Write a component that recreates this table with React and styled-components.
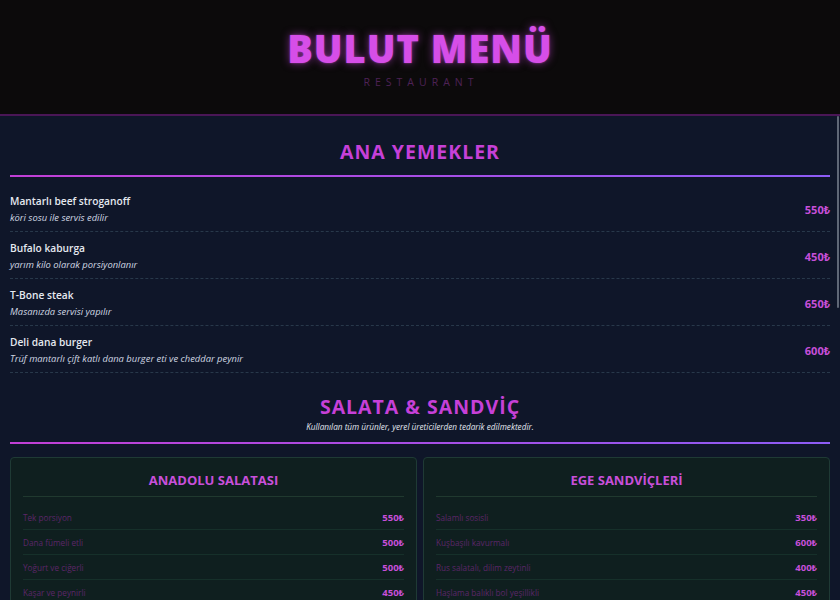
import React from 'react';
import styled, { createGlobalStyle } from 'styled-components';

const GlobalStyle = createGlobalStyle`
  html, body {
    margin: 0;
    padding: 0;
    height: 100%;
    background: #0f1629;
  }
  #root {
    height: 100%;
  }
  * {
    box-sizing: border-box;
  }
`;

const Page = styled.div`
  position: relative;
  height: 100vh;
  display: flex;
  flex-direction: column;
  font-family: "Open Sans", "Noto Sans", sans-serif;
  background: #0f1629;
`;

const Header = styled.header`
  flex: 0 0 auto;
  height: 116px;
  background: #0c0a0b;
  border-bottom: 2px solid #4a1656;
  display: flex;
  flex-direction: column;
  align-items: center;
  padding-top: 26px;
`;

const Brand = styled.h1`
  margin: 0;
  font-size: 38px;
  line-height: 44px;
  font-weight: 800;
  letter-spacing: 1px;
  color: #d64ee8;
  text-shadow: 0 0 8px rgba(214, 78, 232, 0.55), 0 0 2px rgba(214, 78, 232, 0.6);
`;

const Tagline = styled.div`
  margin-top: 5px;
  font-size: 10.5px;
  line-height: 15px;
  letter-spacing: 5px;
  color: #4e2256;
  padding-left: 2px;
`;

const Main = styled.main`
  flex: 1 1 auto;
  overflow-y: auto;
  padding: 0 10px 24px;
  scrollbar-width: none;

  &::-webkit-scrollbar {
    display: none;
  }
`;

/* thin scrollbar thumb of the content pane */
const ScrollThumb = styled.div`
  position: absolute;
  top: 116px;
  right: 1px;
  width: 2px;
  height: 192px;
  border-radius: 1px;
  background: #5f6776;
`;

const SectionHead = styled.div`
  padding-top: ${p => p.$top}px;
  display: flex;
  flex-direction: column;
  align-items: center;
`;

const SectionTitle = styled.h2`
  margin: 0;
  font-size: 19.5px;
  line-height: 28px;
  font-weight: 700;
  letter-spacing: 1px;
  color: #c640d8;
`;

const SectionNote = styled.p`
  margin: 0;
  font-size: 8.2px;
  line-height: 12px;
  font-style: italic;
  color: #e2e8f0;
`;

const Divider = styled.div`
  width: 100%;
  height: 2px;
  margin-top: 9px;
  background: linear-gradient(90deg, #c23fd6, #8d5cf5);
`;

const ItemList = styled.ul`
  list-style: none;
  margin: 8px 0 0;
  padding: 0;
`;

const Item = styled.li`
  display: flex;
  align-items: center;
  justify-content: space-between;
  padding: 8px 0 6px;
  border-bottom: 1px dashed #28384a;
`;

const ItemText = styled.div`
  display: flex;
  flex-direction: column;
  gap: 2px;
`;

const ItemName = styled.span`
  font-size: 10.2px;
  line-height: 16px;
  font-weight: 600;
  color: #e5e9f0;
`;

const ItemDesc = styled.span`
  font-size: 9.4px;
  line-height: 14px;
  font-style: italic;
  color: #cfd6e2;
`;

const Price = styled.span`
  font-size: ${p => (p.$small ? 9.5 : 11)}px;
  font-weight: 700;
  color: #c74fd9;
`;

const CardGrid = styled.div`
  display: grid;
  grid-template-columns: 1fr 1fr;
  gap: 6px;
  margin-top: 13px;
`;

const Card = styled.div`
  background: #0f1f1f;
  border: 1px solid #1f3a35;
  border-radius: 4px;
  padding: 12px 12px 10px;
`;

const CardTitle = styled.h3`
  margin: 0;
  padding-bottom: 6px;
  text-align: center;
  font-size: 13px;
  line-height: 20px;
  font-weight: 700;
  color: #c84fda;
  border-bottom: 1px solid #20392f;
`;

const CardList = styled.ul`
  list-style: none;
  margin: 8px 0 0;
  padding: 0;
`;

const CardRow = styled.li`
  display: flex;
  justify-content: space-between;
  align-items: center;
  padding: 5.5px 0;
  line-height: 13px;
  border-bottom: 1px solid #16302a;

  &:last-child {
    border-bottom: none;
  }
`;

const CardItem = styled.span`
  font-size: 8.2px;
  color: #5c2668;
`;

const mains = [
  { name: 'Mantarlı beef stroganoff', desc: 'köri sosu ile servis edilir', price: '550₺' },
  { name: 'Bufalo kaburga', desc: 'yarım kilo olarak porsiyonlanır', price: '450₺' },
  { name: 'T-Bone steak', desc: 'Masanızda servisi yapılır', price: '650₺' },
  { name: 'Deli dana burger', desc: 'Trüf mantarlı çift katlı dana burger eti ve cheddar peynir', price: '600₺' },
];

const cards = [
  {
    title: 'ANADOLU SALATASI',
    rows: [
      ['Tek porsiyon', '550₺'],
      ['Dana fümeli etli', '500₺'],
      ['Yoğurt ve ciğerli', '500₺'],
      ['Kaşar ve peynirli', '450₺'],
      ['Ton balıklı', '500₺'],
    ],
  },
  {
    title: 'EGE SANDVİÇLERİ',
    rows: [
      ['Salamlı sosisli', '350₺'],
      ['Kuşbaşılı kavurmalı', '600₺'],
      ['Rus salatalı, dilim zeytinli', '400₺'],
      ['Haşlama balıklı bol yeşillikli', '450₺'],
      ['Tavuklu ve közlenmiş biberli', '400₺'],
    ],
  },
];

const desserts = [
  { name: 'Fırın sütlaç', desc: 'fındık kırığı ile servis edilir', price: '150₺' },
  { name: 'Künefe', desc: 'Hatay peyniri ve Antep fıstığı ile', price: '220₺' },
  { name: 'Trileçe', desc: 'karamel soslu, günlük taze', price: '160₺' },
  { name: 'Katmer', desc: 'dondurma ile birlikte sunulur', price: '240₺' },
];

const App = () => {
  return (
    <>
      <GlobalStyle />
      <Page>
        <Header>
          <Brand>BULUT MENÜ</Brand>
          <Tagline>RESTAURANT</Tagline>
        </Header>
        <Main>
          <SectionHead $top={22}>
            <SectionTitle>ANA YEMEKLER</SectionTitle>
            <Divider />
          </SectionHead>
          <ItemList>
            {mains.map(m => (
              <Item key={m.name}>
                <ItemText>
                  <ItemName>{m.name}</ItemName>
                  <ItemDesc>{m.desc}</ItemDesc>
                </ItemText>
                <Price>{m.price}</Price>
              </Item>
            ))}
          </ItemList>

          <SectionHead $top={20}>
            <SectionTitle>SALATA &amp; SANDVİÇ</SectionTitle>
            <SectionNote>Kullanılan tüm ürünler, yerel üreticilerden tedarik edilmektedir.</SectionNote>
            <Divider />
          </SectionHead>
          <CardGrid>
            {cards.map(c => (
              <Card key={c.title}>
                <CardTitle>{c.title}</CardTitle>
                <CardList>
                  {c.rows.map(([label, price]) => (
                    <CardRow key={label}>
                      <CardItem>{label}</CardItem>
                      <Price $small>{price}</Price>
                    </CardRow>
                  ))}
                </CardList>
              </Card>
            ))}
          </CardGrid>

          <SectionHead $top={24}>
            <SectionTitle>TATLILAR</SectionTitle>
            <Divider />
          </SectionHead>
          <ItemList>
            {desserts.map(m => (
              <Item key={m.name}>
                <ItemText>
                  <ItemName>{m.name}</ItemName>
                  <ItemDesc>{m.desc}</ItemDesc>
                </ItemText>
                <Price>{m.price}</Price>
              </Item>
            ))}
          </ItemList>
        </Main>
        <ScrollThumb />
      </Page>
    </>
  );
};

export default App;
